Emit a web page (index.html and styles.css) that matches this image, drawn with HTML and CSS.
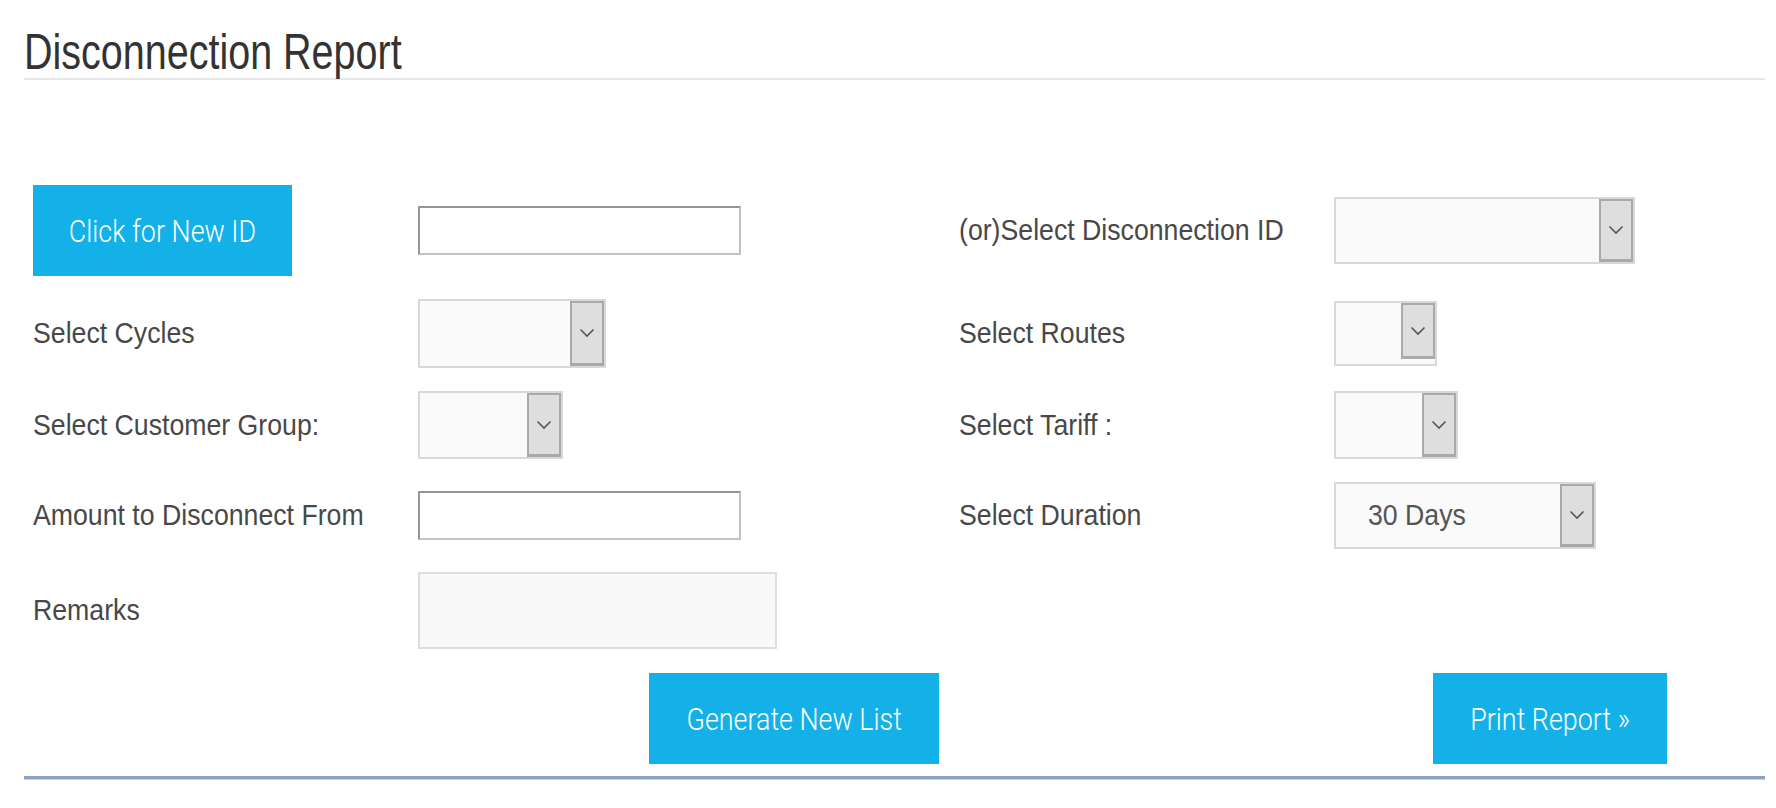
FILE: index.html
```html
<!DOCTYPE html>
<html lang="en">
<head>
<meta charset="utf-8">
<title>Disconnection Report</title>
<link rel="stylesheet" href="styles.css">
</head>
<body>
<div class="page">
  <h1 class="title"><span class="title-text">Disconnection Report</span></h1>

  <div class="form">
    <div class="cell"><button class="btn btn-newid" type="button"><span class="btn-text">Click for New ID</span></button></div>
    <div class="cell"><div class="input input-w323"></div></div>
    <div class="cell label"><span class="label-text">(or)Select Disconnection ID</span></div>
    <div class="cell">
      <div class="select select-disc"><span class="select-value"></span><span class="select-arrow"><svg class="chev" width="16" height="10" viewBox="0 0 16 10"><polyline points="1.5,1.5 8,8 14.5,1.5" fill="none" stroke="#555" stroke-width="1.6"/></svg></span></div>
    </div>

    <div class="cell label"><span class="label-text">Select Cycles</span></div>
    <div class="cell">
      <div class="select select-cycles"><span class="select-value"></span><span class="select-arrow"><svg class="chev" width="16" height="10" viewBox="0 0 16 10"><polyline points="1.5,1.5 8,8 14.5,1.5" fill="none" stroke="#555" stroke-width="1.6"/></svg></span></div>
    </div>
    <div class="cell label"><span class="label-text">Select Routes</span></div>
    <div class="cell">
      <div class="select select-routes"><span class="select-value"></span><span class="select-arrow select-arrow-short"><svg class="chev" width="16" height="10" viewBox="0 0 16 10"><polyline points="1.5,1.5 8,8 14.5,1.5" fill="none" stroke="#555" stroke-width="1.6"/></svg></span></div>
    </div>

    <div class="cell label"><span class="label-text">Select Customer Group:</span></div>
    <div class="cell">
      <div class="select select-group"><span class="select-value"></span><span class="select-arrow"><svg class="chev" width="16" height="10" viewBox="0 0 16 10"><polyline points="1.5,1.5 8,8 14.5,1.5" fill="none" stroke="#555" stroke-width="1.6"/></svg></span></div>
    </div>
    <div class="cell label"><span class="label-text">Select Tariff :</span></div>
    <div class="cell">
      <div class="select select-tariff"><span class="select-value"></span><span class="select-arrow"><svg class="chev" width="16" height="10" viewBox="0 0 16 10"><polyline points="1.5,1.5 8,8 14.5,1.5" fill="none" stroke="#555" stroke-width="1.6"/></svg></span></div>
    </div>

    <div class="cell label"><span class="label-text">Amount to Disconnect From</span></div>
    <div class="cell"><div class="input input-w323"></div></div>
    <div class="cell label"><span class="label-text">Select Duration</span></div>
    <div class="cell">
      <div class="select select-duration"><span class="select-value"><span class="value-text">30 Days</span></span><span class="select-arrow"><svg class="chev" width="16" height="10" viewBox="0 0 16 10"><polyline points="1.5,1.5 8,8 14.5,1.5" fill="none" stroke="#555" stroke-width="1.6"/></svg></span></div>
    </div>

    <div class="cell label"><span class="label-text">Remarks</span></div>
    <div class="cell"><div class="textarea"></div></div>
    <div class="cell"></div>
    <div class="cell"></div>
  </div>

  <div class="actions">
    <button class="btn btn-generate" type="button"><span class="btn-text">Generate New List</span></button>
    <button class="btn btn-print" type="button"><span class="btn-text">Print Report »</span></button>
  </div>

  <div class="rule"></div>
</div>
</body>
</html>
```

FILE: styles.css
```css
* {
  box-sizing: border-box;
}

html, body {
  margin: 0;
  padding: 0;
  background: #ffffff;
}

body {
  font-family: "Liberation Sans", Arial, sans-serif;
  color: #444444;
}

.page {
  padding: 27px 11px 0 24px;
}

.title {
  margin: 0;
  font-size: 50px;
  line-height: 50px;
  font-weight: normal;
  color: #333333;
  padding-bottom: 1px;
  border-bottom: 2px solid #e6e6e6;
  white-space: nowrap;
}

.title-text {
  display: inline-block;
  transform: scaleX(0.79);
  transform-origin: left center;
}

.form {
  margin-top: 105px;
  padding-left: 9px;
  display: grid;
  grid-template-columns: 385px 541px 375px 1fr;
  grid-template-rows: 91px 69px 68px 67px 77px;
  row-gap: 23px;
  align-items: center;
}

.cell {
  display: flex;
  align-items: center;
}

.label {
  font-size: 29px;
  color: #484848;
  white-space: nowrap;
}

.label-text,
.value-text {
  display: inline-block;
  transform: scaleX(0.92);
  transform-origin: left center;
}

.btn {
  border: 0;
  margin: 0;
  padding: 0;
  background: #14b1e9;
  color: #ffffff;
  font-family: Roboto, "Liberation Sans", sans-serif;
  font-weight: 300;
  font-size: 32px;
  height: 91px;
  display: flex;
  align-items: center;
  justify-content: center;
  white-space: nowrap;
  cursor: pointer;
}

.btn-text {
  display: inline-block;
  transform: scaleX(0.84);
  transform-origin: center center;
}

.btn-newid {
  width: 259px;
}

.btn-generate {
  width: 290px;
}

.btn-print {
  width: 234px;
}

.input {
  height: 49px;
  background: #ffffff;
  border-style: solid;
  border-width: 2px;
  border-color: #959595 #c2c2c2 #c2c2c2 #959595;
}

.input-w323 {
  width: 323px;
}

.textarea {
  width: 359px;
  height: 77px;
  background: #f9f9f9;
  border: 2px solid #dedede;
}

.select {
  display: flex;
  align-items: stretch;
  background: #fafafa;
  border: 2px solid #d8d8d8;
}

.select-value {
  flex: 1;
  display: flex;
  align-items: center;
  padding-left: 32px;
  font-size: 29px;
  color: #555555;
  white-space: nowrap;
}

.select-arrow {
  width: 34px;
  flex: none;
  display: flex;
  align-items: center;
  justify-content: center;
  background: #dedede;
  border-style: solid;
  border-color: #a9a9a9;
  border-width: 2px 2px 3px 2px;
}

.chev {
  display: block;
}

.select-arrow-short {
  align-self: flex-start;
  height: 56px;
}

.select-disc {
  width: 301px;
  height: 67px;
}

.select-cycles {
  width: 188px;
  height: 69px;
}

.select-routes {
  width: 103px;
  height: 65px;
}

.select-group {
  width: 145px;
  height: 68px;
}

.select-tariff {
  width: 124px;
  height: 68px;
}

.select-duration {
  width: 262px;
  height: 67px;
}

.actions {
  margin-top: 24px;
  padding-left: 625px;
  display: flex;
  gap: 494px;
}

.rule {
  margin-top: 12px;
  height: 4px;
  background: #8da2bf;
  border-bottom: 1px solid #c8d2e0;
}
```
